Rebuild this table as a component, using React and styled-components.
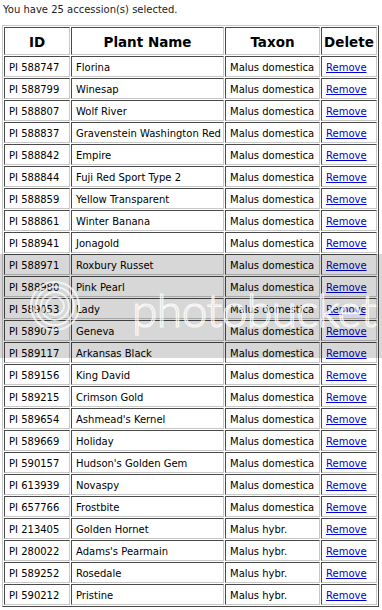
import React from "react";
import styled, { createGlobalStyle } from "styled-components";

const GlobalStyle = createGlobalStyle`
  html, body {
    margin: 0;
    padding: 0;
    background: #ffffff;
  }
  body {
    font-family: "DejaVu Sans", Verdana, sans-serif;
    color: #000;
  }
`;

const Page = styled.div`
  position: relative;
  padding: 3px 0 0 2px;
  width: 382px;
  height: 610px;
  box-sizing: border-box;
  overflow: hidden;
`;

const Summary = styled.p`
  margin: 0 0 8px 1px;
  font-size: 10px;
  line-height: 14px;
  color: #1c1c1c;
`;

const Table = styled.table`
  border-collapse: separate;
  border-spacing: 1px;
  table-layout: fixed;
  width: 377px;
  border-style: solid;
  border-width: 1px;
  border-color: #c8c8c8 #4a4a4a #4a4a4a #c8c8c8;
`;

const HeaderCell = styled.th`
  box-sizing: border-box;
  width: ${(p) => p.$w}px;
  height: 28px;
  padding: 1px 0 0;
  border-style: solid;
  border-width: 1px;
  border-color: #4a4a4a #c8c8c8 #c8c8c8 #4a4a4a;
  font-family: "DejaVu Sans", Verdana, sans-serif;
  font-weight: bold;
  font-size: 13.5px;
  text-align: center;
  vertical-align: middle;
  color: #000;
  white-space: nowrap;
`;

const Cell = styled.td`
  box-sizing: border-box;
  height: 21px;
  padding: 2px 0 0 4px;
  border-style: solid;
  border-width: 1px;
  border-color: #4a4a4a #c8c8c8 #c8c8c8 #4a4a4a;
  font-size: 10px;
  line-height: 16px;
  vertical-align: middle;
  white-space: nowrap;
  overflow: hidden;
  color: #000;
`;

const RemoveLink = styled.a`
  color: #0000cc;
  text-decoration: underline;
  cursor: pointer;
`;

const Watermark = styled.div`
  position: absolute;
  left: 0;
  right: 0;
  top: 254px;
  height: 104px;
  background: rgba(0, 0, 0, 0.155);
  pointer-events: none;
  display: flex;
  align-items: center;
  padding-left: 30px;
  gap: 52px;
  box-sizing: border-box;
`;

const WatermarkText = styled.span`
  font-family: "Lato", "Open Sans", sans-serif;
  font-weight: 300;
  font-size: 46px;
  line-height: 1;
  letter-spacing: -0.5px;
  white-space: nowrap;
  color: rgba(255, 255, 255, 0.2);
  -webkit-text-stroke: 1.2px rgba(255, 255, 255, 0.85);
  margin-top: 8px;
`;

const rows = [
  ["PI 588747", "Florina", "Malus domestica"],
  ["PI 588799", "Winesap", "Malus domestica"],
  ["PI 588807", "Wolf River", "Malus domestica"],
  ["PI 588837", "Gravenstein Washington Red", "Malus domestica"],
  ["PI 588842", "Empire", "Malus domestica"],
  ["PI 588844", "Fuji Red Sport Type 2", "Malus domestica"],
  ["PI 588859", "Yellow Transparent", "Malus domestica"],
  ["PI 588861", "Winter Banana", "Malus domestica"],
  ["PI 588941", "Jonagold", "Malus domestica"],
  ["PI 588971", "Roxbury Russet", "Malus domestica"],
  ["PI 588980", "Pink Pearl", "Malus domestica"],
  ["PI 589053", "Lady", "Malus domestica"],
  ["PI 589079", "Geneva", "Malus domestica"],
  ["PI 589117", "Arkansas Black", "Malus domestica"],
  ["PI 589156", "King David", "Malus domestica"],
  ["PI 589215", "Crimson Gold", "Malus domestica"],
  ["PI 589654", "Ashmead's Kernel", "Malus domestica"],
  ["PI 589669", "Holiday", "Malus domestica"],
  ["PI 590157", "Hudson's Golden Gem", "Malus domestica"],
  ["PI 613939", "Novaspy", "Malus domestica"],
  ["PI 657766", "Frostbite", "Malus domestica"],
  ["PI 213405", "Golden Hornet", "Malus hybr."],
  ["PI 280022", "Adams's Pearmain", "Malus hybr."],
  ["PI 589252", "Rosedale", "Malus hybr."],
  ["PI 590212", "Pristine", "Malus hybr."],
];

function Logo() {
  return (
    <svg width="50" height="50" viewBox="0 0 50 50" fill="none">
      {[24, 19, 14, 9].map((r) => (
        <circle
          key={r}
          cx="25"
          cy="25"
          r={r}
          stroke="rgba(255,255,255,0.7)"
          strokeWidth="2"
        />
      ))}
    </svg>
  );
}

export default function App() {
  return (
    <>
      <GlobalStyle />
      <Page>
        <Summary>You have 25 accession(s) selected.</Summary>
        <Table>
          <thead>
            <tr>
              <HeaderCell $w={66}>ID</HeaderCell>
              <HeaderCell $w={153}>Plant Name</HeaderCell>
              <HeaderCell $w={95}>Taxon</HeaderCell>
              <HeaderCell $w={56}>Delete</HeaderCell>
            </tr>
          </thead>
          <tbody>
            {rows.map(([id, name, taxon]) => (
              <tr key={id}>
                <Cell>{id}</Cell>
                <Cell>{name}</Cell>
                <Cell>{taxon}</Cell>
                <Cell>
                  <RemoveLink href="#">Remove</RemoveLink>
                </Cell>
              </tr>
            ))}
          </tbody>
        </Table>
        <Watermark>
          <Logo />
          <WatermarkText>photobucket</WatermarkText>
        </Watermark>
      </Page>
    </>
  );
}
